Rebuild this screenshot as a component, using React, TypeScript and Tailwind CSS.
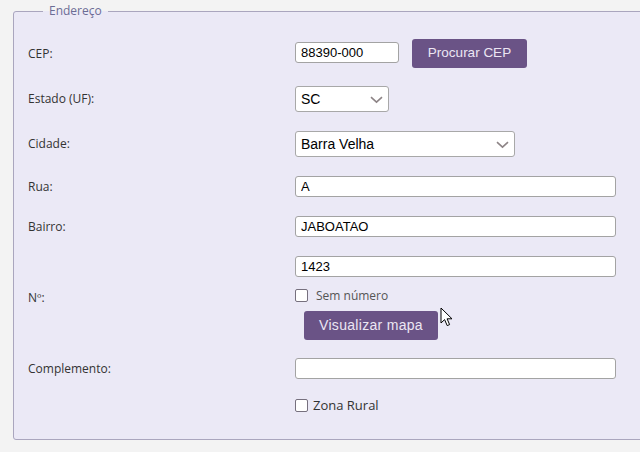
import React from "react";

const LABEL = "w-[267px] shrink-0 text-[12px] text-[#333333] font-['Open_Sans',sans-serif]";
const INPUT =
  "block h-[21px] rounded-[3px] border border-[#a3a3a3] bg-white px-[5px] text-[13px] text-black font-['Liberation_Sans',Arial,sans-serif] outline-none";
const BUTTON =
  "rounded-[3px] bg-[#6a5386] text-[#ece6f3] font-['Liberation_Sans',Arial,sans-serif]";

function Chevron() {
  return (
    <svg width="13" height="8" viewBox="0 0 13 8" className="pointer-events-none absolute right-[6px] top-[10px]">
      <path d="M1 1.2 L6.5 6.2 L12 1.2" fill="none" stroke="#8d8486" strokeWidth="1.6" />
    </svg>
  );
}

function Select({ value, width }: { value: string; width: string }) {
  return (
    <div className={`relative ${width}`}>
      <select
        defaultValue={value}
        className="block h-[26px] w-full appearance-none rounded-[3px] border border-[#a8a8a8] bg-white pl-[5px] text-[14px] text-black font-['Liberation_Sans',Arial,sans-serif] outline-none"
      >
        <option>{value}</option>
      </select>
      <Chevron />
    </div>
  );
}

function Box() {
  return <span className="inline-block h-[13px] w-[13px] shrink-0 rounded-[2px] border border-[#76707e] bg-white" />;
}

export default function App() {
  return (
    <div className="relative h-[452px] w-[640px] overflow-hidden bg-[#f3f3f3]">
      <fieldset className="ml-[13px] mt-[2px] w-[660px] rounded-[3px] border border-[#aaa6be] bg-[#ebe9f6] pb-[27px] pl-[14px] pt-[19px]">
        <legend className="ml-[15px] px-[6px] text-[12px] text-[#6b6c95] font-['Open_Sans',sans-serif]">Endereço</legend>

        {/* CEP */}
        <div className="flex h-[29px] items-center">
          <span className={LABEL}>CEP:</span>
          <input defaultValue="88390-000" className={`${INPUT} -mt-[3px] w-[104px]`} />
          <button className={`${BUTTON} ml-[13px] h-[29px] w-[115px] text-[13.5px]`}>Procurar CEP</button>
        </div>

        {/* Estado */}
        <div className="mt-[18px] flex items-center">
          <span className={LABEL}>Estado (UF):</span>
          <Select value="SC" width="w-[94px]" />
        </div>

        {/* Cidade */}
        <div className="mt-[19px] flex items-center">
          <span className={LABEL}>Cidade:</span>
          <Select value="Barra Velha" width="w-[220px]" />
        </div>

        {/* Rua */}
        <div className="mt-[19px] flex items-center">
          <span className={LABEL}>Rua:</span>
          <input defaultValue="A" className={`${INPUT} w-[321px]`} />
        </div>

        {/* Bairro */}
        <div className="mt-[19px] flex items-center">
          <span className={LABEL}>Bairro:</span>
          <input defaultValue="JABOATAO" className={`${INPUT} w-[321px]`} />
        </div>

        {/* Numero */}
        <div className="mt-[19px] flex items-center">
          <span className={LABEL}>Nº:</span>
          <div className="flex flex-col">
            <input defaultValue="1423" className={`${INPUT} w-[321px]`} />
            <label className="mt-[12px] flex items-center">
              <Box />
              <span className="ml-[8px] text-[12px] leading-[13px] text-[#555555] font-['Open_Sans',sans-serif]">Sem número</span>
            </label>
            <button className={`${BUTTON} ml-[9px] mt-[9px] h-[29px] w-[134px] text-[14px] tracking-[0.3px]`}>
              Visualizar mapa
            </button>
          </div>
        </div>

        {/* Complemento */}
        <div className="mt-[18px] flex items-center">
          <span className={LABEL}>Complemento:</span>
          <input defaultValue="" className={`${INPUT} w-[321px]`} />
        </div>

        {/* Zona rural */}
        <div className="mt-[19px] flex items-center">
          <span className="w-[267px] shrink-0" />
          <label className="flex items-center">
            <Box />
            <span className="ml-[5px] text-[13px] leading-[14px] text-[#333333] font-['Open_Sans',sans-serif]">Zona Rural</span>
          </label>
        </div>
      </fieldset>

      {/* mouse pointer */}
      <svg width="16" height="22" viewBox="0 0 16 22" className="absolute left-[440px] top-[307px]">
        <path
          d="M1 1 L1 16 L4.6 12.6 L7.2 18.6 L9.6 17.6 L7.1 11.8 L12 11.8 Z"
          fill="#ffffff"
          stroke="#000000"
          strokeWidth="1"
          strokeLinejoin="miter"
        />
      </svg>
    </div>
  );
}
